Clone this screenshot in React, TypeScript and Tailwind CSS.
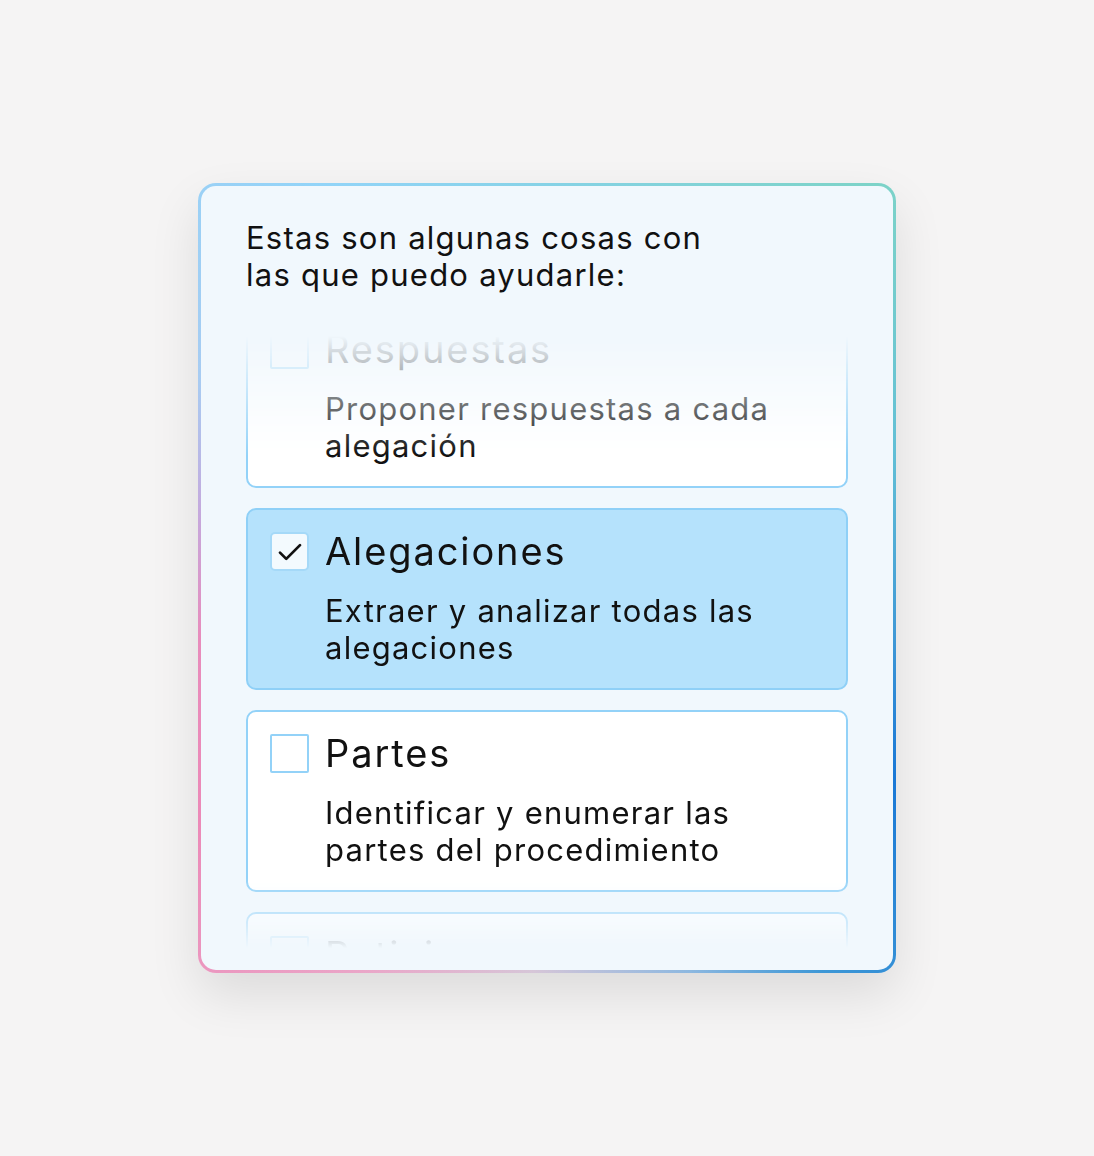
const items = [
  { title: 'Respuestas', desc: ['Proponer respuestas a cada', 'alegación'], checked: false },
  { title: 'Alegaciones', desc: ['Extraer y analizar todas las', 'alegaciones'], checked: true },
  { title: 'Partes', desc: ['Identificar y enumerar las', 'partes del procedimiento'], checked: false },
  { title: 'Peticiones', desc: ['Resumir las peticiones de', 'cada parte'], checked: false },
];

const CheckBox = ({ checked }: { checked: boolean }) =>
  checked ? (
    <div className="w-[39px] h-[39px] shrink-0 flex items-center justify-center rounded-[5px] border-2 border-[#a5d9f8] bg-[#f3fafe]">
      <svg width="30" height="30" viewBox="0 0 24 24" fill="none" stroke="#111" strokeWidth="2.2" strokeLinecap="round" strokeLinejoin="round">
        <path d="M4 12.5l5 5L20 6.5" />
      </svg>
    </div>
  ) : (
    <div className="w-[39px] h-[39px] shrink-0 rounded-[2px] border-2 border-[#93d2f8] bg-white" />
  );

const App = () => {
  return (
    <div className="w-full h-[1156px] bg-[#f5f4f4] flex items-center justify-center font-['Inter',sans-serif] text-[#111]">
      {/* gradient border card */}
      <div className="w-[698px] h-[790px] p-[3px] rounded-[18px] bg-[conic-gradient(from_0deg,#86d2e6_0deg,#7dd3c8_40deg,#62bfd6_70deg,#3f98d6_100deg,#1a78d6_120deg,#3d97d6_145deg,#8db8e0_160deg,#d6c6d8_182deg,#eaa6c8_205deg,#ec8ab8_235deg,#e88cbc_260deg,#c6a8dc_280deg,#a8ccf2_300deg,#92d4f8_330deg,#86d2e6_360deg)] shadow-[0_22px_50px_rgba(0,0,0,0.10)]">
        <div className="w-full h-full rounded-[15px] bg-[#f1f8fd] flex flex-col pl-[45px] pr-[45px] pt-[33px] pb-[22px]">
          <p className="text-[31px] leading-[37px] tracking-[0.04em] mb-[13px]">
            Estas son algunas cosas con
            <br />
            las que puedo ayudarle:
          </p>

          <div className="flex-1 min-h-0 overflow-hidden [mask-image:linear-gradient(to_bottom,transparent_30px,black_150px,black_calc(100%_-_70px),transparent)]">
            <div className="flex flex-col gap-[20px]">
              {items.map((item) => (
                <div
                  key={item.title}
                  className={`h-[182px] shrink-0 rounded-[10px] border-2 pl-[22px] pr-[22px] pt-[22px] ${
                    item.checked ? 'bg-[#b5e2fc] border-[#8fd0f7]' : 'bg-white border-[#93d2f8]'
                  }`}
                >
                  <div className="flex items-center gap-[16px]">
                    <CheckBox checked={item.checked} />
                    <span className="text-[38px] leading-[39px] tracking-[0.05em]">{item.title}</span>
                  </div>
                  <p className="ml-[55px] mt-[21px] text-[31px] leading-[37px] tracking-[0.04em]">
                    {item.desc[0]}
                    <br />
                    {item.desc[1]}
                  </p>
                </div>
              ))}
            </div>
          </div>
        </div>
      </div>
    </div>
  );
};

export default App;
